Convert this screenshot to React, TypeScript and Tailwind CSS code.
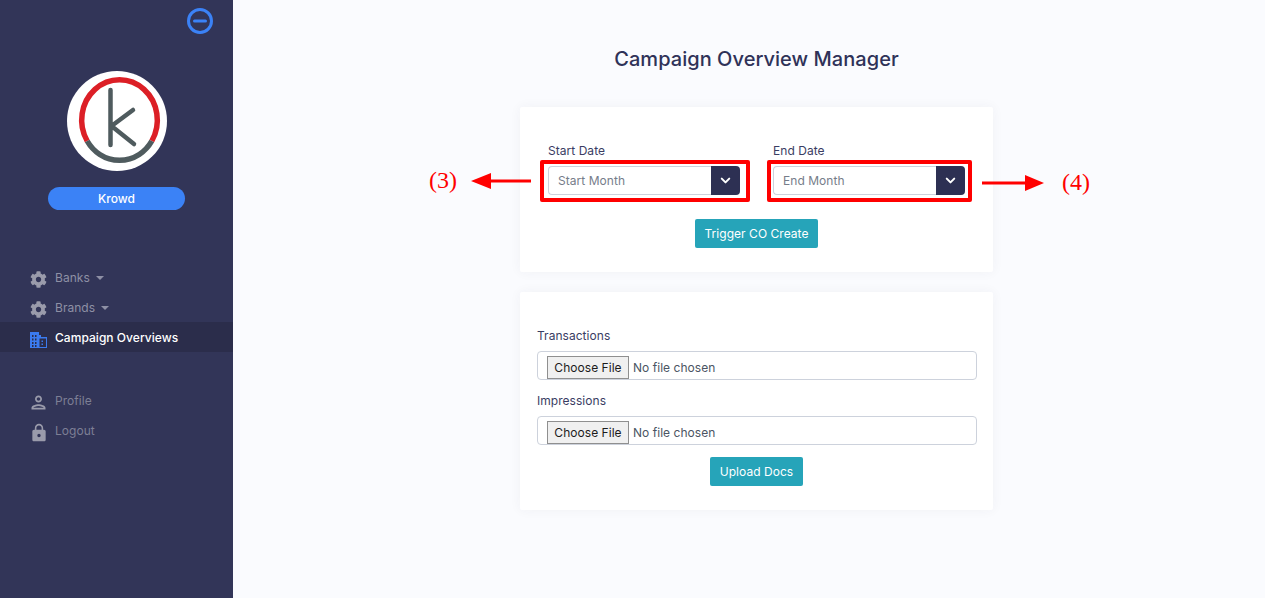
import { ChevronDown } from 'lucide-react'
import { FaCog } from 'react-icons/fa'
import { MdLock, MdOutlinePerson } from 'react-icons/md'

function Logo() {
  return (
    <svg viewBox="0 0 100 100" className="w-[100px] h-[100px]">
      <circle cx="50" cy="50" r="50" fill="#fff" />
      <path d="M20.200 70 A37.800 40.300 0 1 1 84.800 70" fill="none" stroke="#dc1f26" strokeWidth="5.500" />
      <path d="M20.200 70 A37.800 40.300 0 0 0 84.800 70" fill="none" stroke="#4f5b5e" strokeWidth="5.500" />
      <path d="M43.500 19 V74 M66 39 L44.500 55 L67 73" fill="none" stroke="#4f5b5e" strokeWidth="4.500" strokeLinecap="round" strokeLinejoin="round" />
    </svg>
  )
}

function BuildingIcon() {
  return (
    <svg viewBox="0 0 17 16" className="w-[17px] h-[16px] text-[#3b7bf0]" fill="currentColor">
      <path fillRule="evenodd" d="M0 0H9V3H11V5H17V16H0ZM2 3V5H3.500V3ZM5 3V5H6.500V3ZM2 6.500V8.500H3.500V6.500ZM5 6.500V8.500H6.500V6.500ZM2 10V12H3.500V10ZM5 10V12H6.500V10ZM2 13V15H3.500V13ZM5 13V15H6.500V13ZM9.500 6.500V15H16V6.500ZM11.500 8.500H13V10H11.500ZM11.500 11.500H13V13H11.500Z" />
    </svg>
  )
}

function NavItem({ icon, label, caret, active, dim }: { icon: React.ReactNode; label: string; caret?: boolean; active?: boolean; dim?: boolean }) {
  return (
    <div className={`h-[30px] flex items-center pl-[30px] pt-[1px] ${active ? 'bg-[#2b2d4b] text-white font-medium' : dim ? 'text-[#7d7f95]' : 'text-[#8e90a5]'}`}>
      <span className="w-[17px] h-[17px] flex items-center justify-center mr-2 translate-y-[2px] text-[#9a9bab]">{icon}</span>
      <span className="text-xs">{label}</span>
      {caret && <span className="ml-[6px] w-0 h-0 border-x-[4px] border-x-transparent border-t-[4px] border-t-[#8e90a5]" />}
    </div>
  )
}

function MonthSelect({ label, placeholder, side }: { label: string; placeholder: string; side: 'left' | 'right' }) {
  return (
    <div className="w-[192px]">
      <div className="text-xs leading-[15px] text-[#3a3d63] mb-[8px]">{label}</div>
      <div className="relative h-[29px] flex">
        <div className="flex-1 border border-[#cdd2dc] border-r-0 rounded-l-[4px] bg-white pl-[9px] flex items-center text-xs text-[#767d8a]">{placeholder}</div>
        <div className="w-[29px] bg-[#2d3053] rounded-r-[4px] flex items-center justify-center">
          <ChevronDown size={15} strokeWidth={3.2} className="text-white" />
        </div>
        <div className={`absolute top-[-6px] bottom-[-7px] border-[4px] border-[#ff0000] rounded-[2px] ${side === 'left' ? 'left-[-8px] right-[-10px]' : 'left-[-6px] right-[-7px]'}`} />
        {side === 'left' ? (
          <>
            <svg viewBox="0 0 60 16" className="absolute left-[-77px] top-[7px] w-[60px] h-[16px]">
              <path d="M0 8 L20 0 V6.500 H60 V9.500 H20 V16 Z" fill="#ff0000" />
            </svg>
            <span className="absolute left-[-119px] top-0 font-['Liberation_Serif',serif] text-2xl leading-[29px] text-[#f00]">(3)</span>
          </>
        ) : (
          <>
            <svg viewBox="0 0 62 16" className="absolute left-[209px] top-[9px] w-[62px] h-[16px]">
              <path d="M62 8 L43 0 V6.500 H0 V9.500 H43 V16 Z" fill="#ff0000" />
            </svg>
            <span className="absolute left-[289px] top-[2px] font-['Liberation_Serif',serif] text-2xl leading-[29px] text-[#f00]">(4)</span>
          </>
        )}
      </div>
    </div>
  )
}

function FileField({ label }: { label: string }) {
  return (
    <div>
      <div className="text-xs leading-[15px] text-[#3a3d63] mb-[8px]">{label}</div>
      <div className="h-[29px] border border-[#cdd2dc] rounded-[4px] bg-white pl-[9px] pt-[4px] overflow-hidden">
        <input
          type="file"
          className="block w-full text-xs leading-[22px] text-[#4b5563] file:h-[23px] file:w-[82px] file:mr-[4px] file:bg-[#f0f0f0] file:border file:border-[#8f8f8f] file:text-[#1c1c1c] file:text-xs"
        />
      </div>
    </div>
  )
}

export default function App() {
  return (
    <div className="h-screen flex overflow-hidden font-['Inter',sans-serif] tracking-[0.04px] bg-[#fafbfe]">
      <aside className="w-[233px] shrink-0 bg-[#323558] flex flex-col">
        <div className="h-[71px] flex justify-end pt-[8px] pr-[20px]">
          <svg viewBox="0 0 26 26" className="w-[26px] h-[26px]">
            <circle cx="13" cy="13" r="11.500" fill="none" stroke="#3b82f6" strokeWidth="3" />
            <path d="M7.500 13H18.500" stroke="#3b82f6" strokeWidth="3" strokeLinecap="round" />
          </svg>
        </div>
        <div className="flex flex-col items-center">
          <Logo />
          <div className="mt-[16px] w-[137px] h-[23px] rounded-full bg-[#3b82f6] text-white text-xs font-medium flex items-center justify-center">Krowd</div>
        </div>
        <nav className="mt-[52px]">
          <NavItem icon={<FaCog size={17} />} label="Banks" caret />
          <NavItem icon={<FaCog size={17} />} label="Brands" caret />
          <NavItem icon={<BuildingIcon />} label="Campaign Overviews" active />
        </nav>
        <nav className="mt-[33px]">
          <NavItem icon={<MdOutlinePerson size={21} className="shrink-0" />} label="Profile" dim />
          <NavItem icon={<MdLock size={20} className="shrink-0" />} label="Logout" dim />
        </nav>
      </aside>
      <main className="flex-1 flex flex-col items-center pl-[15px] pt-[46px]">
        <h1 className="text-xl leading-[26px] font-medium text-[#2f3258]">Campaign Overview Manager</h1>
        <section className="mt-[35px] w-[473px] h-[165px] bg-white rounded-[2px] shadow-[0_0_12px_rgba(50,53,88,0.05)] pt-[36px] flex flex-col items-center">
          <div className="flex gap-[33px]">
            <MonthSelect label="Start Date" placeholder="Start Month" side="left" />
            <MonthSelect label="End Date" placeholder="End Month" side="right" />
          </div>
          <button className="mt-[24px] w-[123px] h-[29px] bg-[#26a4b9] text-white text-xs rounded-[2px]">Trigger CO Create</button>
        </section>
        <section className="mt-[20px] w-[473px] h-[218px] bg-white rounded-[2px] shadow-[0_0_12px_rgba(50,53,88,0.05)] pt-[36px] pl-[17px] pr-[16px] flex flex-col">
          <FileField label="Transactions" />
          <div className="mt-[13px]"><FileField label="Impressions" /></div>
          <button className="self-center mt-[12px] mr-[1px] w-[93px] h-[29px] bg-[#26a4b9] text-white text-xs rounded-[2px]">Upload Docs</button>
        </section>
      </main>
    </div>
  )
}
